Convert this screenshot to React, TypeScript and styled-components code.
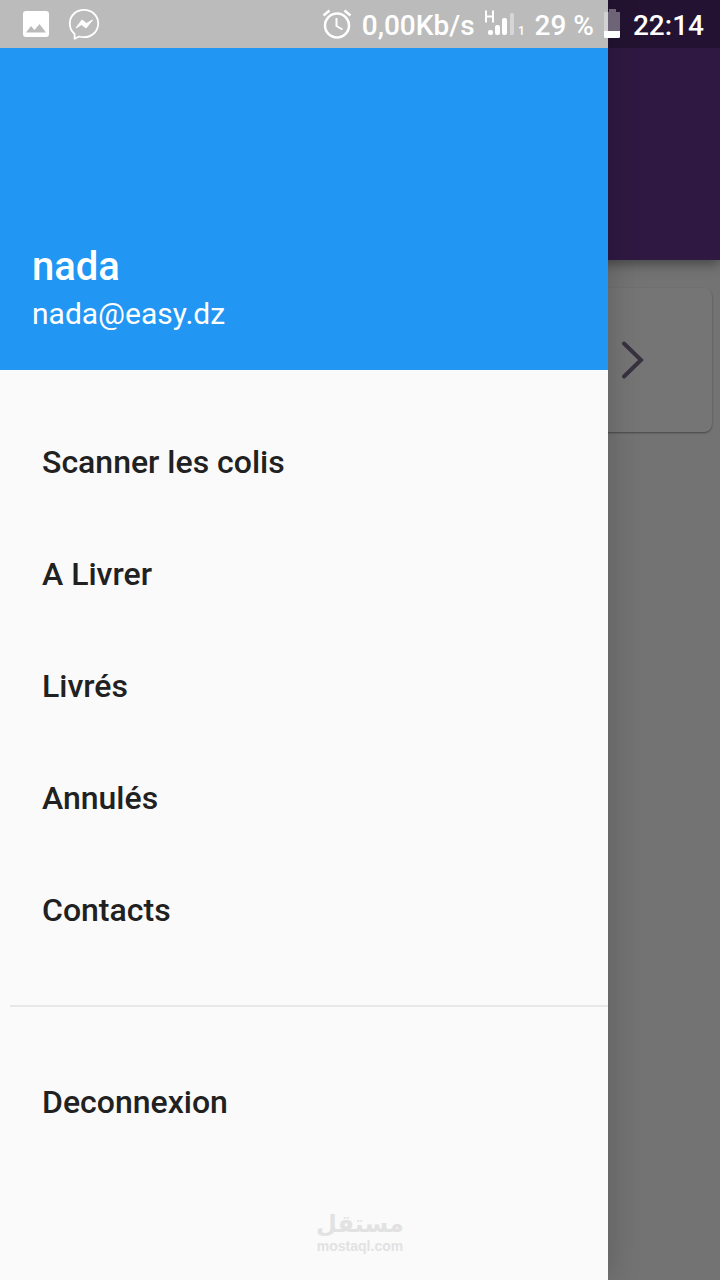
import React from "react";
import styled, { createGlobalStyle } from "styled-components";

const GlobalStyle = createGlobalStyle`
  *, *::before, *::after { box-sizing: border-box; }
  body {
    margin: 0;
    font-family: Roboto, "Liberation Sans", sans-serif;
    -webkit-font-smoothing: antialiased;
  }
`;

const Screen = styled.div`
  position: relative;
  min-height: 100vh;
  overflow: hidden;
  display: flex;
  flex-direction: column;
  background: #fafafa;
`;

const AppBar = styled.header`
  height: 260px;
  background: #673790;
  box-shadow: 0 4px 12px rgba(0, 0, 0, 0.4);
`;

const Parcels = styled.main`
  flex: 1;
  padding: 28px 8px;
`;

const ParcelCard = styled.button`
  display: flex;
  align-items: center;
  justify-content: flex-end;
  width: 100%;
  height: 144px;
  padding: 0 66px;
  border: 0;
  border-radius: 8px;
  background: #ffffff;
  box-shadow: 0 1px 2px rgba(0, 0, 0, 0.4);
`;

const Scrim = styled.div`
  position: absolute;
  inset: 0;
  background: rgba(0, 0, 0, 0.54);
`;

const Drawer = styled.aside`
  position: absolute;
  inset: 0 112px 0 0;
  display: flex;
  flex-direction: column;
  padding-top: 48px;
  background: #fafafa;
  box-shadow: 0 0 32px rgba(0, 0, 0, 0.2);
`;

const Account = styled.section`
  display: flex;
  flex-direction: column;
  justify-content: flex-end;
  height: 322px;
  padding: 0 32px 36px;
  background: #2196f3;
  color: #ffffff;
`;

const AccountName = styled.h1`
  margin: 0;
  font-size: 40px;
  line-height: 54px;
  font-weight: 500;
`;

const AccountEmail = styled.p`
  margin: 0;
  font-size: 30px;
  line-height: 40px;
`;

const Menu = styled.nav`
  display: flex;
  flex-direction: column;
  padding-top: 36px;
`;

const MenuItem = styled.button`
  height: 112px;
  padding: 0 42px;
  border: 0;
  background: none;
  color: #212121;
  font-family: inherit;
  font-size: 32px;
  font-weight: 500;
  line-height: 40px;
  text-align: left;
`;

const Divider = styled.hr`
  width: calc(100% - 10px);
  height: 2px;
  margin: 39px 0 39px 10px;
  border: 0;
  background: #e8e8e8;
`;

const StatusBar = styled.div`
  position: absolute;
  inset: 0 0 auto 0;
  display: flex;
  align-items: center;
  justify-content: space-between;
  height: 48px;
  padding: 0 16px 0 20px;
  background: rgba(0, 0, 0, 0.25);
  color: #ffffff;
`;

const StatusGroup = styled.div<{ $gap: number }>`
  display: flex;
  align-items: center;
  gap: ${(p) => p.$gap}px;
`;

const StatusText = styled.span`
  padding-top: 4px;
  font-size: 28px;
  font-weight: 500;
  line-height: 44px;
  white-space: nowrap;
`;

const Icon = styled.svg`
  display: block;
  flex: none;
`;

const Watermark = styled.div`
  position: absolute;
  inset: auto 0 26px 0;
  display: flex;
  flex-direction: column;
  align-items: center;
  color: #e2e2e2;
  font-weight: 700;
`;

const WatermarkArabic = styled.span`
  font-family: "DejaVu Sans", sans-serif;
  font-size: 24px;
  line-height: 28px;
`;

const WatermarkLatin = styled.span`
  font-family: "Liberation Sans", sans-serif;
  font-size: 14px;
  line-height: 16px;
`;

const entries = ["Scanner les colis", "A Livrer", "Livrés", "Annulés", "Contacts"];

const PictureIcon = () => (
  <Icon width="32" height="32" viewBox="0 0 32 32" aria-hidden="true">
    <path
      fillRule="evenodd"
      fill="#fff"
      d="M6 3h20a3 3 0 0 1 3 3v20a3 3 0 0 1-3 3H6a3 3 0 0 1-3-3V6a3 3 0 0 1 3-3zM6 24.500h20l-6.500-8.500-5 6-3.500-4z"
    />
  </Icon>
);

const MessengerIcon = () => (
  <Icon width="32" height="32" viewBox="0 0 32 32" aria-hidden="true">
    <path
      fill="none"
      stroke="#fff"
      strokeWidth="1.800"
      strokeLinejoin="round"
      d="M16 1.800C8 1.800 1.800 7.800 1.800 15.500c0 4.300 1.800 8 4.800 10.500v4.800l4.500-2.300c1.500.5 3.200.7 4.900.7 8 0 14.200-6 14.200-13.700S24 1.800 16 1.800z"
    />
    <path fill="#fff" stroke="#fff" strokeLinejoin="round" d="M8 20l6-8 4.500 3.500 6-3.500-6.500 8-4.500-3.500z" />
  </Icon>
);

const AlarmIcon = () => (
  <Icon width="30" height="32" viewBox="0 0 30 32" aria-hidden="true">
    <g fill="none" stroke="#fff">
      <circle cx="15" cy="17.500" r="12" strokeWidth="2.500" />
      <path strokeWidth="2.500" d="M1.500 7.500l6-5M28.500 7.500l-6-5" />
      <path strokeWidth="2" d="M14.500 10v8l6 3.500" />
    </g>
  </Icon>
);

const SignalIcon = () => (
  <Icon width="40" height="32" viewBox="0 0 40 32" aria-hidden="true">
    <path fill="none" stroke="#fff" strokeWidth="2" d="M1 2.500v12M8 2.500v12M1 8.500h7" />
    <rect x="3" y="22" width="5" height="5" rx="2" fill="#fff" />
    <rect x="10" y="17" width="5" height="10" rx="2" fill="#fff" />
    <rect x="17" y="10" width="5" height="17" rx="2" fill="#fff" />
    <rect x="25" y="5" width="4" height="22" rx="1" fill="#fff" opacity="0.4" />
    <text x="33" y="27" fill="#fff" fontFamily="Roboto, sans-serif" fontSize="12" fontWeight="500">
      1
    </text>
  </Icon>
);

const BatteryIcon = () => (
  <Icon width="19" height="30" viewBox="0 0 19 30" aria-hidden="true">
    <path fill="#fff" opacity="0.35" d="M5 0h7v3h4v19H0V3h5z" />
    <path fill="#fff" d="M0 22h16v5.500a1.500 1.500 0 0 1-1.500 1.500h-13A1.500 1.500 0 0 1 0 27.500z" />
  </Icon>
);

export default function App() {
  return (
    <>
      <GlobalStyle />
      <Screen>
        <AppBar />
        <Parcels>
          <ParcelCard aria-label="Ouvrir">
            <Icon width="28" height="44" viewBox="0 0 28 44" aria-hidden="true">
              <path
                d="M6 5.500l17 16.500L6 38.500"
                fill="none"
                stroke="#7a6c8a"
                strokeWidth="4"
                strokeLinecap="round"
                strokeLinejoin="miter"
              />
            </Icon>
          </ParcelCard>
        </Parcels>

        <Scrim />

        <Drawer>
          <Account>
            <AccountName>nada</AccountName>
            <AccountEmail>nada@easy.dz</AccountEmail>
          </Account>
          <Menu>
            {entries.map((entry) => (
              <MenuItem key={entry}>{entry}</MenuItem>
            ))}
            <Divider />
            <MenuItem>Deconnexion</MenuItem>
          </Menu>
        </Drawer>

        <StatusBar>
          <StatusGroup $gap={16}>
            <PictureIcon />
            <MessengerIcon />
          </StatusGroup>
          <StatusGroup $gap={10}>
            <AlarmIcon />
            <StatusText>0,00Kb/s</StatusText>
            <SignalIcon />
            <StatusText>29 %</StatusText>
            <BatteryIcon />
            <StatusText>22:14</StatusText>
          </StatusGroup>
        </StatusBar>

        <Watermark>
          <WatermarkArabic lang="ar" dir="rtl">مستقل</WatermarkArabic>
          <WatermarkLatin>mostaql.com</WatermarkLatin>
        </Watermark>
      </Screen>
    </>
  );
}
